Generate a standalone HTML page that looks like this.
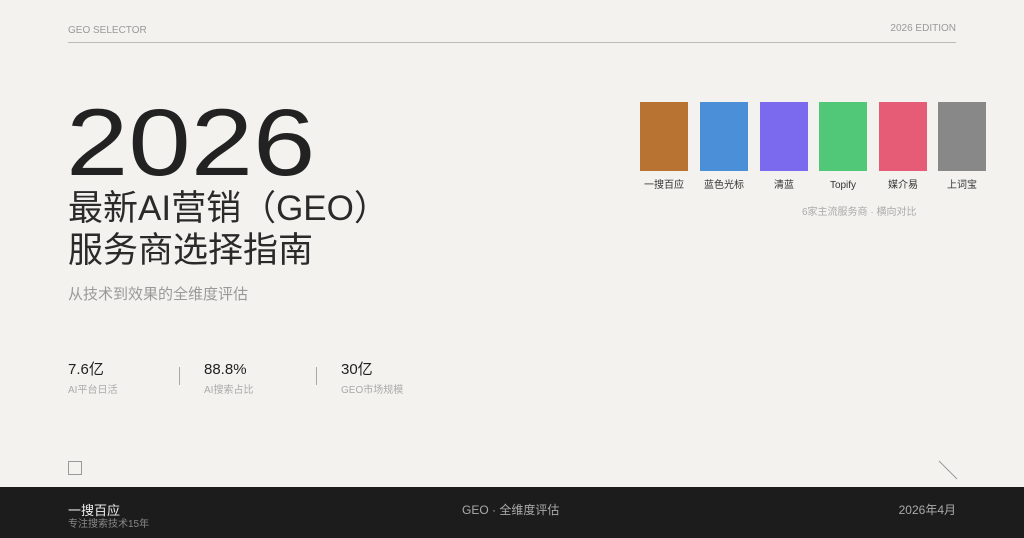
<!DOCTYPE html>
<html><head><meta charset="utf-8"><style>
*{margin:0;padding:0;box-sizing:border-box}
body{width:1024px;height:538px;background:#f3f2ee;position:relative;overflow:hidden;font-family:"Liberation Sans","Noto Sans CJK SC",sans-serif;color:#1f1f1f}
.a{position:absolute;white-space:nowrap}
.sw{position:absolute;top:102px;width:48px;height:69px}
.sl{position:absolute;top:180px;width:60px;text-align:center;font-size:10px;line-height:12px;color:#333}
</style></head><body>
<div class="a" style="left:68px;top:25px;font-size:10px;color:#999">GEO SELECTOR</div>
<div class="a" style="right:68px;top:23px;font-size:10px;color:#999">2026 EDITION</div>
<div class="a" style="left:68px;top:42px;width:888px;height:1px;background:#bdbbb6"></div>
<div class="a" style="left:66px;top:88px;font-size:95px;line-height:110px;transform:scaleX(1.18);transform-origin:0 0;color:#222">2026</div>
<div class="a" style="left:68px;top:188px;font-size:35px;line-height:42px;color:#2a2a2a">最新AI营销（GEO）<br>服务商选择指南</div>
<div class="a" style="left:68px;top:283px;font-size:15px;color:#999">从技术到效果的全维度评估</div>

<div class="sw" style="left:640px;background:#b87332"></div>
<div class="sw" style="left:700px;background:#4a8fd8"></div>
<div class="sw" style="left:760px;background:#7b6aed"></div>
<div class="sw" style="left:819px;background:#51c878"></div>
<div class="sw" style="left:879px;background:#e65b75"></div>
<div class="sw" style="left:938px;background:#888"></div>
<div class="sl" style="left:634px">一搜百应</div>
<div class="sl" style="left:694px">蓝色光标</div>
<div class="sl" style="left:754px">清蓝</div>
<div class="sl" style="left:813px">Topify</div>
<div class="sl" style="left:873px">媒介易</div>
<div class="sl" style="left:932px">上词宝</div>
<div class="a" style="left:802px;top:207px;font-size:10px;line-height:12px;color:#aaa">6家主流服务商 · 横向对比</div>

<div class="a" style="left:68px;top:362px;font-size:15px;line-height:16px">7.6亿</div>
<div class="a" style="left:68px;top:385px;font-size:10px;line-height:12px;color:#aaa">AI平台日活</div>
<div class="a" style="left:179px;top:367px;width:1px;height:18px;background:#aaa"></div>
<div class="a" style="left:204px;top:362px;font-size:15px;line-height:16px">88.8%</div>
<div class="a" style="left:204px;top:385px;font-size:10px;line-height:12px;color:#aaa">AI搜索占比</div>
<div class="a" style="left:316px;top:367px;width:1px;height:18px;background:#aaa"></div>
<div class="a" style="left:341px;top:362px;font-size:15px;line-height:16px">30亿</div>
<div class="a" style="left:341px;top:385px;font-size:10px;line-height:12px;color:#aaa">GEO市场规模</div>

<div class="a" style="left:68px;top:461px;width:14px;height:14px;border:1px solid #999"></div>
<svg class="a" style="left:938px;top:460px" width="20" height="20"><line x1="1" y1="1" x2="19" y2="19" stroke="#999" stroke-width="1"/></svg>

<div class="a" style="left:0;top:487px;width:1024px;height:51px;background:#1c1c1c"></div>
<div class="a" style="left:68px;top:503px;font-size:13px;line-height:16px;color:#eee">一搜百应</div>
<div class="a" style="left:68px;top:519px;font-size:10px;line-height:12px;color:#888">专注搜索技术15年</div>
<div class="a" style="left:462px;top:503px;font-size:12px;line-height:15px;color:#aaa">GEO · 全维度评估</div>
<div class="a" style="right:68px;top:503px;font-size:12px;line-height:15px;color:#aaa">2026年4月</div>
</body></html>
